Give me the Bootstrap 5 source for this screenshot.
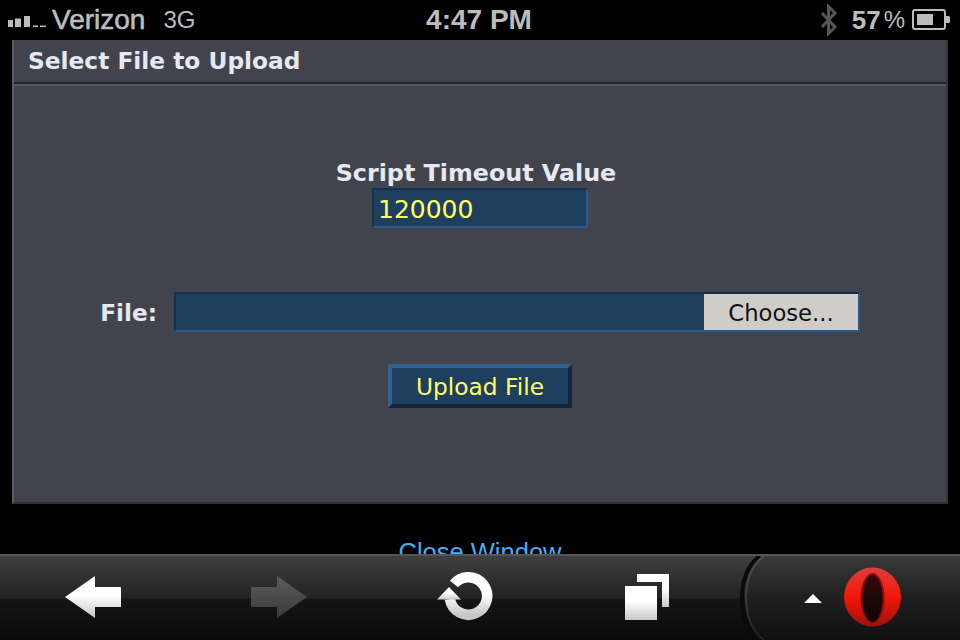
<!DOCTYPE html>
<html lang="en">
<head>
  <meta charset="UTF-8">
  <title>Select File to Upload</title>
  <meta name="viewport" content="width=device-width, initial-scale=1">
  <link href="https://cdn.jsdelivr.net/npm/bootstrap@5.3.0/dist/css/bootstrap.min.css" rel="stylesheet">
  <style>
    html, body { height: 640px; overflow: hidden; background: #000; }
    .status-bar { height: 40px; color: #bcbcbc; font-family: "Liberation Sans", Arial, sans-serif; padding: 0 10px 0 8px; flex: none; }
    .status-side { flex: 1 1 0; }
    .signal-bars { margin-top: 4px; }
    .carrier { font-size: 28px; font-weight: 400; margin-left: 6px; -webkit-text-stroke: .6px #bcbcbc; }
    .net { font-size: 24px; margin-left: 18px; }
    .clock { font-size: 28px; font-weight: 700; }
    .batt-num { font-size: 26px; font-weight: 700; margin-left: 14px; }
    .batt-pct { font-size: 24px; margin-left: 3px; margin-right: 7px; }
    .upload-panel { margin: 0 12px; height: 464px; flex: none; background: #41444d; border: 0; border-left: 2px solid #5a5d64; border-right: 2px solid #33363c; border-bottom: 2px solid #2c2f35; border-radius: 0; font-family: "DejaVu Sans", sans-serif; }
    .upload-head { height: 46px; padding: 0 14px; background: #41444d; color: #e6e8f2; font-size: 23.3px; font-weight: 700; line-height: 42px; border: 0; border-radius: 0 !important; box-shadow: inset 0 -2px 0 #555860; position: relative; }
    .upload-head::after { content: ""; display: block; position: absolute; left: 0; right: 0; top: 42px; height: 2px; background: #22262a; }
    .upload-body { padding: 70px 0 0; }
    .field-title { color: #e6e8f2; font-size: 23.8px; font-weight: 700; line-height: 34px; height: 32px; margin: 0 8px 0 0; }
    .field-box { width: 216px; height: 40px; background: #1f3f5f !important; color: #ffff66 !important; font-size: 25px; padding: 2px 4px 0; border-radius: 0; border-style: solid; border-width: 2px; border-color: #14304d #2a5a8e #2a5a8e #14304d; box-shadow: none; font-family: inherit; }
    .file-row { margin-top: 64px; }
    .file-label { width: 143px; margin: 2px 17px 0 0; color: #e6e8f2; font-size: 23.2px; font-weight: 700; text-align: right; }
    .file-box { width: 686px; height: 40px; background: #1f3f5f; border-style: solid; border-width: 2px; border-color: #14304d #2a5a8e #2a5a8e #14304d; }
    .choose-btn { width: 154px; height: 36px; padding: 2px 0 0; border: 0; border-radius: 0; background: #d0cdc8; color: #111; font-size: 22.7px; line-height: 34px; font-family: inherit; }
    .upload-btn { display: block; width: 184px; height: 44px; margin: 32px 0 0 374px; padding: 2px 0 0; background: #1f3f5f; color: #ffff66; font-family: inherit; font-size: 23.3px; line-height: 34px; border-radius: 0; border-style: solid; border-width: 4px; border-color: #33608f #14243a #14243a #33608f; }
    .close-zone { height: 50px; flex: none; overflow: hidden; padding-top: 33px; }
    .close-link { color: #45aef5; font-family: "Liberation Sans", Arial, sans-serif; font-size: 25.5px; line-height: 30px; text-decoration: none; }
    .tool-bar { height: 86px; flex: none; position: relative; padding: 0 0 2px 65px; border-top: 2px solid #555; background: linear-gradient(#3f3f3f 0, #222 50%, #141414 52%, #0a0a0a 100%); }
    .tab-arc { position: absolute; left: 736px; top: 0; }
    .t-fwd { margin-left: 130px; }
    .t-reload { margin-left: 130px; }
    .t-tabs { margin-left: 131px; }
    .t-menu { margin: 3px 0 0 135px; position: relative; }
    .t-opera { margin-left: 21px; position: relative; }
  </style>
</head>
<body class="d-flex flex-column m-0">
  <!-- status bar -->
  <div class="status-bar d-flex align-items-center">
    <div class="status-side d-flex align-items-center">
      <svg class="signal-bars" width="38" height="12" viewBox="0 0 38 12"><path fill="#bcbcbc" d="M0 4h5v7H0zM7 2.500h6V11H7zM16 0h6v11h-6zM25 9.500h5V11h-5zM32 9.500h6V11h-6z"/></svg>
      <span class="carrier">Verizon</span><span class="net">3G</span>
    </div>
    <div class="clock">4:47 PM</div>
    <div class="status-side d-flex align-items-center justify-content-end">
      <svg width="18" height="32" viewBox="0 0 18 32"><path fill="none" stroke="#555" stroke-width="3" d="M2 9l13 14-6.500 6.500V2.500L15 9 2 23"/></svg>
      <span class="batt-num">57</span><span class="batt-pct">%</span>
      <svg width="38" height="22" viewBox="0 0 38 22"><rect x="1" y="1" width="32" height="19" rx="2" fill="none" stroke="#bcbcbc" stroke-width="2"/><rect x="5" y="5" width="16" height="11" fill="#bcbcbc"/><path fill="#bcbcbc" d="M34 7h2.500a1.500 1.500 0 0 1 1.500 1.500v4a1.500 1.500 0 0 1-1.500 1.500H34z"/></svg>
    </div>
  </div>

  <!-- upload panel -->
  <div class="card upload-panel">
    <div class="card-header upload-head">Select File to Upload</div>
    <form class="card-body upload-body" onsubmit="return false">
      <div class="d-flex flex-column align-items-center">
        <label class="field-title" for="timeoutVal">Script Timeout Value</label>
        <input class="form-control field-box" id="timeoutVal" value="120000">
      </div>
      <div class="d-flex align-items-center file-row">
        <label class="file-label" for="chooseBtn">File:</label>
        <div class="file-box d-flex justify-content-end">
          <button type="button" class="btn choose-btn" id="chooseBtn">Choose...</button>
        </div>
      </div>
      <button type="submit" class="btn upload-btn">Upload File</button>
    </form>
  </div>

  <div class="close-zone text-center"><a class="close-link" href="#">Close Window</a></div>

  <!-- browser toolbar -->
  <div class="tool-bar d-flex align-items-center">
    <svg class="tab-arc" width="224" height="84" viewBox="0 0 224 84">
      <defs>
        <linearGradient id="tabFill" x1="0" y1="0" x2="0" y2="1"><stop offset="0" stop-color="#3a3a3a"/><stop offset=".5" stop-color="#1f1f1f"/><stop offset="1" stop-color="#101010"/></linearGradient>
        <linearGradient id="tabEdge" x1="0" y1="0" x2="0" y2="1"><stop offset="0" stop-color="#505050"/><stop offset=".5" stop-color="#3c3c3c"/><stop offset="1" stop-color="#202020"/></linearGradient>
      </defs>
      <path d="M28 0C4 16 4 68 28 84H224V0z" fill="url(#tabFill)"/>
      <path d="M24 0C0 16 0 68 24 84" fill="none" stroke="#0a0a0a" stroke-width="4"/>
      <path d="M28 0C4 16 4 68 28 84" fill="none" stroke="url(#tabEdge)" stroke-width="2"/>
    </svg>
    <svg width="56" height="42" viewBox="0 0 56 42">
      <defs>
        <linearGradient id="iconW" x1="0" y1="0" x2="0" y2="1"><stop offset=".45" stop-color="#fff"/><stop offset="1" stop-color="#c8c8c8"/></linearGradient>
        <linearGradient id="iconG" x1="0" y1="0" x2="0" y2="1"><stop offset="0" stop-color="#5c5c5c"/><stop offset="1" stop-color="#3a3a3a"/></linearGradient>
        <linearGradient id="operaR" x1="0" y1="0" x2="0" y2="1"><stop offset="0" stop-color="#e23c3c"/><stop offset=".5" stop-color="#f21608"/><stop offset="1" stop-color="#a01010"/></linearGradient>
        <linearGradient id="operaH" x1="0" y1="0" x2="0" y2="1"><stop offset="0" stop-color="#3a0808"/><stop offset=".5" stop-color="#1c0808"/><stop offset="1" stop-color="#120404"/></linearGradient>
      </defs>
      <path fill="url(#iconW)" d="M0 21L30 0v11h26v20H30v11z"/>
    </svg>
    <svg class="t-fwd" width="56" height="42" viewBox="0 0 56 42"><path fill="url(#iconG)" d="M56 21L26 0v11H0v20h26v11z"/></svg>
    <svg class="t-reload" width="57" height="50" viewBox="0 0 57 50">
      <path fill="none" stroke="url(#iconW)" stroke-width="10.500" d="M12.900 27A18.750 18.750 0 1 0 17 12"/>
      <path fill="url(#iconW)" d="M0 27.500h24L12 15z"/>
    </svg>
    <svg class="t-tabs" width="44" height="46" viewBox="0 0 44 46">
      <path fill="url(#iconW)" d="M12 0h32v33h-7V8H12z"/>
      <path fill="url(#iconW)" d="M0 12h32v34H0z"/>
    </svg>
    <svg class="t-menu" width="18" height="9" viewBox="0 0 18 9"><path fill="#fff" d="M0 9h18L9 0z"/></svg>
    <svg class="t-opera" width="59" height="62" viewBox="0 0 59 62">
      <ellipse cx="29.500" cy="31" rx="28.500" ry="29.500" fill="url(#operaR)"/>
      <ellipse cx="29.500" cy="32" rx="12" ry="25" fill="#8c0c0c"/>
      <ellipse cx="29.500" cy="32.500" rx="10" ry="23.500" fill="url(#operaH)"/>
    </svg>
  </div>
</body>
</html>
